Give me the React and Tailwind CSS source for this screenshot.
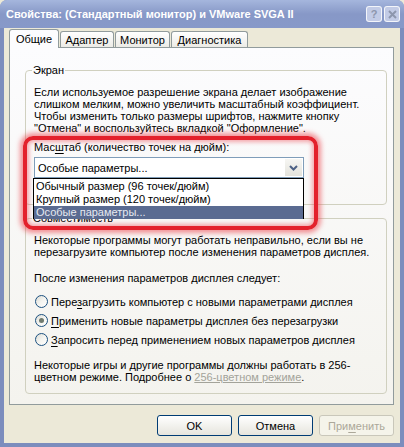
import React from "react";

const F = { fontFamily: '"Liberation Sans", Arial, sans-serif' };

function U({ children }) {
  return <span className="underline underline-offset-[2px]">{children}</span>;
}

function Radio({ checked, children }) {
  return (
    <div className="flex items-center h-[19px]">
      <div className="w-[13px] h-[13px] rounded-full border border-[#1c5180] bg-gradient-to-br from-[#dcdcd5] via-[#f4f4f0] to-white flex items-center justify-center ml-[1px]">
        {checked && <div className="w-[5px] h-[5px] rounded-full bg-[#6f7a6f]" />}
      </div>
      <span className="ml-[3px]">{children}</span>
    </div>
  );
}

function Btn({ children, disabled }) {
  return (
    <div
      className={
        "w-[75px] h-[21px] rounded-[3px] border flex items-center justify-center " +
        (disabled
          ? "border-[#c9c7ba] bg-[#f5f4ea] text-[#aca899]"
          : "border-[#003c74] bg-gradient-to-b from-white to-[#e6e5dd] text-black")
      }
    >
      {children}
    </div>
  );
}

export default function App() {
  return (
    <div className="w-[404px] h-[447px] overflow-hidden bg-[#ece9d8] text-[11px] leading-[12px] text-black" style={F}>
      <div className="w-full h-full flex flex-col bg-[#7c8dbd] rounded-t-[7px] relative">
        {/* Title bar */}
        <div className="h-[28px] shrink-0 rounded-t-[7px] bg-gradient-to-b from-[#a5b6dd] via-[#8798c7] to-[#8799c9] flex items-center pl-[6px] pr-[4px]">
          <h1 className="text-white font-bold text-[11px] leading-[14px] whitespace-nowrap">
            Свойства: (Стандартный монитор) и VMware SVGA II
          </h1>
          <div className="ml-auto flex gap-[2px]">
            <div className="w-[16px] h-[16px] rounded-[3px] border border-white/80 bg-[#c2cbe6] flex items-center justify-center text-[11px] font-bold text-[#8d96ad]">?</div>
            <div className="w-[16px] h-[16px] rounded-[3px] border border-white/80 bg-[#c2cbe6] flex items-center justify-center">
              <svg width="9" height="9" viewBox="0 0 9 9"><path d="M1 1 L8 8 M8 1 L1 8" stroke="#8d96ad" strokeWidth="2" /></svg>
            </div>
          </div>
        </div>
        {/* Body */}
        <div className="flex-1 mx-[4px] mb-[4px] bg-[#ece9d8] flex flex-col px-[5px]">
          {/* Tabs */}
          <div className="flex items-end h-[19px] relative z-10">
            <div className="w-[50px] h-[19px] bg-[#fcfcfe] border border-[#919b9c] border-b-0 rounded-t-[3px] flex items-center justify-center -mb-[1px] pb-[1px]">Общие</div>
            <div className="w-[54px] h-[16px] bg-gradient-to-b from-white to-[#ecebe6] border border-[#919b9c] border-b-0 rounded-t-[3px] flex items-center justify-center ml-[1px]">Адаптер</div>
            <div className="w-[55px] h-[16px] bg-gradient-to-b from-white to-[#ecebe6] border border-[#919b9c] border-b-0 rounded-t-[3px] flex items-center justify-center ml-[1px]">Монитор</div>
            <div className="w-[77px] h-[16px] bg-gradient-to-b from-white to-[#ecebe6] border border-[#919b9c] border-b-0 rounded-t-[3px] flex items-center justify-center ml-[1px]">Диагностика</div>
          </div>
          {/* Panel */}
          <div className="w-[385px] h-[358px] border border-[#919b9c] bg-gradient-to-b from-[#fcfcfe] to-[#f4f3ee] pl-[15px] pr-[6px] pt-[22px]">
            {/* Group Экран */}
            <div className="relative border border-[#d0d0bf] rounded-[4px] h-[135px] px-[8px] pt-[15px]">
              <span className="absolute -top-[7px] left-[6px] px-[1px] leading-[13px] bg-[#fbfbfc]">Экран</span>
              <p>Если используемое разрешение экрана делает изображение слишком мелким, можно увеличить масштабный коэффициент. Чтобы изменить только размеры шрифтов, нажмите кнопку "Отмена" и воспользуйтесь вкладкой "Оформление".</p>
              <p className="mt-[7px]">Мас<U>ш</U>таб (количество точек на дюйм):</p>
              <div className="mt-[4px] w-[270px] h-[21px] border border-[#7f9db9] bg-white flex items-center pl-[3px] pr-[1px]">
                <span>Особые параметры...</span>
                <div className="ml-auto w-[17px] h-[17px] bg-gradient-to-b from-[#f6f6f3] to-[#e4e3dc] flex items-center justify-center">
                  <svg width="9" height="6" viewBox="0 0 9 6"><path d="M1 1 L4.5 4.5 L8 1" fill="none" stroke="#4d6185" strokeWidth="2" /></svg>
                </div>
              </div>
            </div>
            {/* Group Совместимость */}
            <div className="relative border border-[#d0d0bf] rounded-[4px] h-[176px] mt-[13px] px-[8px] pt-[15px]">
              <span className="absolute -top-[7px] left-[6px] px-[1px] leading-[13px] bg-[#f9f9f9]">Совместимость</span>
              <p>Некоторые программы могут работать неправильно, если вы не перезагрузите компьютер после изменения параметров дисплея.</p>
              <p className="mt-[14px]">После изменения параметров дисплея следует:</p>
              <div className="mt-[8px] flex flex-col">
                <Radio>Пере<U>з</U>агрузить компьютер с новыми параметрами дисплея</Radio>
                <Radio checked><U>П</U>рименить новые параметры дисплея без перезагрузки</Radio>
                <Radio><U>З</U>апросить перед применением новых параметров дисплея</Radio>
              </div>
              <p className="mt-[10px]">
                Некоторые игры и другие программы должны работать в 256-цветном режиме. Подробнее о{" "}
                <span className="text-[#a3a39a] underline">256-цветном режиме</span>.
              </p>
            </div>
          </div>
          {/* Buttons */}
          <div className="flex justify-end gap-[6px] mt-[10px] pr-[1px]">
            <Btn>OK</Btn>
            <Btn>Отмена</Btn>
            <Btn disabled>При<U>м</U>енить</Btn>
          </div>
        </div>

        {/* Dropdown list overlay */}
        <div className="absolute left-[33px] top-[178px] w-[271px] h-[41px] border border-black bg-white z-20 flex flex-col pt-[1px]">
          <div className="h-[13px] pl-[2px] leading-[13px]">Обычный размер (96 точек/дюйм)</div>
          <div className="h-[13px] pl-[2px] leading-[13px]">Крупный размер (120 точек/дюйм)</div>
          <div className="h-[13px] pl-[2px] leading-[13px] bg-[#5a6b91] text-[#e6e9f0]">Особые параметры...</div>
        </div>
        {/* Red highlight */}
        <div className="absolute left-[23px] top-[136px] w-[295px] h-[94px] rounded-[10px] border-[4px] border-[#e3212c] shadow-[0_0_5px_3px_rgba(235,60,70,0.55),inset_0_0_4px_2px_rgba(235,60,70,0.45)] z-30 pointer-events-none" />
      </div>
    </div>
  );
}
